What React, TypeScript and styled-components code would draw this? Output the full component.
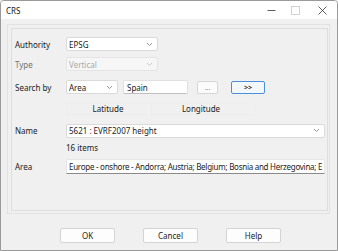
import { FC } from 'react';
import styled, { createGlobalStyle } from 'styled-components';

const Global = createGlobalStyle`
  html, body {
    margin: 0;
    padding: 0;
    background: #f0f0f0;
  }
  * {
    box-sizing: border-box;
  }
`;

const Window = styled.div`
  width: 338px;
  height: 251px;
  border: 1px solid #9a9a9a;
  border-radius: 4px 4px 0 0;
  background: #f0f0f0;
  font-family: 'Noto Sans', 'Open Sans', sans-serif;
  font-size: 8px;
  color: #1a1a1a;
  display: flex;
  flex-direction: column;
  overflow: hidden;
`;

const TitleBar = styled.div`
  height: 18px;
  background: #fff;
  display: flex;
  align-items: center;
  padding-left: 5px;

  span {
    flex: 1;
    font-size: 8px;
  }
`;

const Ctrl = styled.div<{ $w?: number }>`
  width: ${(p) => p.$w ?? 24}px;
  height: 18px;
  display: flex;
  align-items: center;
  justify-content: center;
`;

const Outer = styled.div`
  margin: 5px 7px 0 6px;
  height: 190px;
  border: 1px solid #e2e2e2;
  padding: 3px 1px 2px 3px;
`;

const Panel = styled.div`
  height: 100%;
  border: 1px solid #dedede;
  padding: 8px 2px 0 2px;
  display: grid;
  grid-template-columns: 52px 1fr;
  align-content: start;
  align-items: center;
`;

const Label = styled.div<{ $dim?: boolean }>`
  color: ${(p) => (p.$dim ? '#707070' : '#1a1a1a')};
  padding-left: 1px;
`;

const Row = styled.div<{ $mt: number; $h?: number }>`
  grid-column: 1 / -1;
  display: grid;
  grid-template-columns: 52px 1fr;
  align-items: center;
  margin-top: ${(p) => p.$mt}px;
  height: ${(p) => p.$h ?? 14}px;
`;

const Fields = styled.div`
  display: flex;
  align-items: center;
  height: 100%;
`;

const Combo = styled.div<{ $w?: number; $disabled?: boolean }>`
  width: ${(p) => (p.$w ? `${p.$w}px` : '100%')};
  height: 14px;
  background: ${(p) => (p.$disabled ? '#f6f6f6' : '#fff')};
  border: 1px solid ${(p) => (p.$disabled ? '#e4e4e4' : '#dadada')};
  border-radius: 2px;
  display: flex;
  align-items: center;
  padding: 0 4px 0 2px;
  color: ${(p) => (p.$disabled ? '#a8a8a8' : '#1a1a1a')};

  span {
    flex: 1;
    white-space: nowrap;
    overflow: hidden;
  }
`;

const Chevron: FC<{ light?: boolean }> = ({ light }) => (
  <svg width="7" height="5" viewBox="0 0 7 5">
    <path d="M1 1 L3.5 3.5 L6 1" fill="none" stroke={light ? '#c4c4c4' : '#8a8a8a'} strokeWidth="0.9" />
  </svg>
);

const TextBox = styled.div<{ $w: number; $ml: number }>`
  width: ${(p) => p.$w}px;
  margin-left: ${(p) => p.$ml}px;
  height: 14px;
  background: #fff;
  border: 1px solid #e0e0e0;
  border-bottom-color: #c0c0c0;
  border-radius: 2px;
  padding: 0 3px;
  display: flex;
  align-items: center;
`;

const SmallBtn = styled.div<{ $w: number; $ml: number; $accent?: boolean }>`
  width: ${(p) => p.$w}px;
  height: 13px;
  margin-left: ${(p) => p.$ml}px;
  border: 1px solid ${(p) => (p.$accent ? '#4a90d9' : '#d6d6d6')};
  background: ${(p) => (p.$accent ? '#f3f8fd' : '#fbfbfb')};
  border-radius: 2px;
  display: flex;
  align-items: center;
  justify-content: center;
  font-size: 7px;
  font-weight: ${(p) => (p.$accent ? 700 : 400)};
  color: ${(p) => (p.$accent ? '#222' : '#888')};
`;

const Coord = styled.div<{ $w: number; $ml: number }>`
  width: ${(p) => p.$w}px;
  margin-left: ${(p) => p.$ml}px;
  height: 13px;
  border: 1px solid #ededed;
  border-right-color: #f2f2f2;
  display: flex;
  align-items: center;
  justify-content: center;
`;

const Underlined = styled.div`
  width: 100%;
  height: 15px;
  background: #fff;
  border: 1px solid #e6e6e6;
  border-bottom: 1px solid #8a8a8a;
  border-radius: 2px 2px 0 0;
  padding: 0 2px;
  display: flex;
  align-items: center;
  white-space: nowrap;
  overflow: hidden;
  letter-spacing: -0.27px;
  color: #222;
`;

const Footer = styled.div`
  display: flex;
  justify-content: center;
  gap: 28px;
  margin-top: 14px;
  padding-left: 3px;
`;

const Button = styled.div`
  width: 55px;
  height: 15px;
  background: #fdfdfd;
  border: 1px solid #d4d4d4;
  border-radius: 2px;
  display: flex;
  align-items: center;
  justify-content: center;
  color: #222;
`;

const App: FC = () => (
  <Window>
    <Global />
    <TitleBar>
      <span>CRS</span>
      <Ctrl>
        <svg width="9" height="9" viewBox="0 0 9 9">
          <path d="M0.5 4.5 H8.5" stroke="#333" strokeWidth="0.8" />
        </svg>
      </Ctrl>
      <Ctrl>
        <svg width="9" height="9" viewBox="0 0 9 9">
          <rect x="0.5" y="0.5" width="8" height="8" fill="none" stroke="#c8c8c8" strokeWidth="0.8" />
        </svg>
      </Ctrl>
      <Ctrl $w={30}>
        <svg width="9" height="9" viewBox="0 0 9 9">
          <path d="M0.5 0.5 L8.5 8.5 M8.5 0.5 L0.5 8.5" stroke="#333" strokeWidth="0.8" />
        </svg>
      </Ctrl>
    </TitleBar>
    <Outer>
      <Panel>
        <Row $mt={0}>
          <Label>Authority</Label>
          <Fields>
            <Combo $w={92}>
              <span>EPSG</span>
              <Chevron />
            </Combo>
          </Fields>
        </Row>
        <Row $mt={6}>
          <Label $dim>Type</Label>
          <Fields>
            <Combo $w={92} $disabled>
              <span>Vertical</span>
              <Chevron light />
            </Combo>
          </Fields>
        </Row>
        <Row $mt={9}>
          <Label>Search by</Label>
          <Fields>
            <Combo $w={52}>
              <span>Area</span>
              <Chevron />
            </Combo>
            <TextBox $w={65} $ml={5}>
              Spain
            </TextBox>
            <SmallBtn $w={21} $ml={9}>
              ...
            </SmallBtn>
            <SmallBtn $w={34} $ml={13} $accent>
              &gt;&gt;
            </SmallBtn>
          </Fields>
        </Row>
        <Row $mt={7}>
          <div />
          <Fields>
            <Coord $w={84} $ml={0}>Latitude</Coord>
            <Coord $w={100} $ml={1}>Longitude</Coord>
          </Fields>
        </Row>
        <Row $mt={8} $h={15}>
          <Label>Name</Label>
          <Fields>
            <Combo>
              <span>5621 : EVRF2007 height</span>
              <Chevron />
            </Combo>
          </Fields>
        </Row>
        <Row $mt={2} $h={14}>
          <div />
          <div>16 items</div>
        </Row>
        <Row $mt={5} $h={15}>
          <Label>Area</Label>
          <Underlined>
            Europe - onshore - Andorra; Austria; Belgium; Bosnia and Herzegovina; E
          </Underlined>
        </Row>
      </Panel>
    </Outer>
    <Footer>
      <Button>OK</Button>
      <Button>Cancel</Button>
      <Button>Help</Button>
    </Footer>
  </Window>
);

export default App;
